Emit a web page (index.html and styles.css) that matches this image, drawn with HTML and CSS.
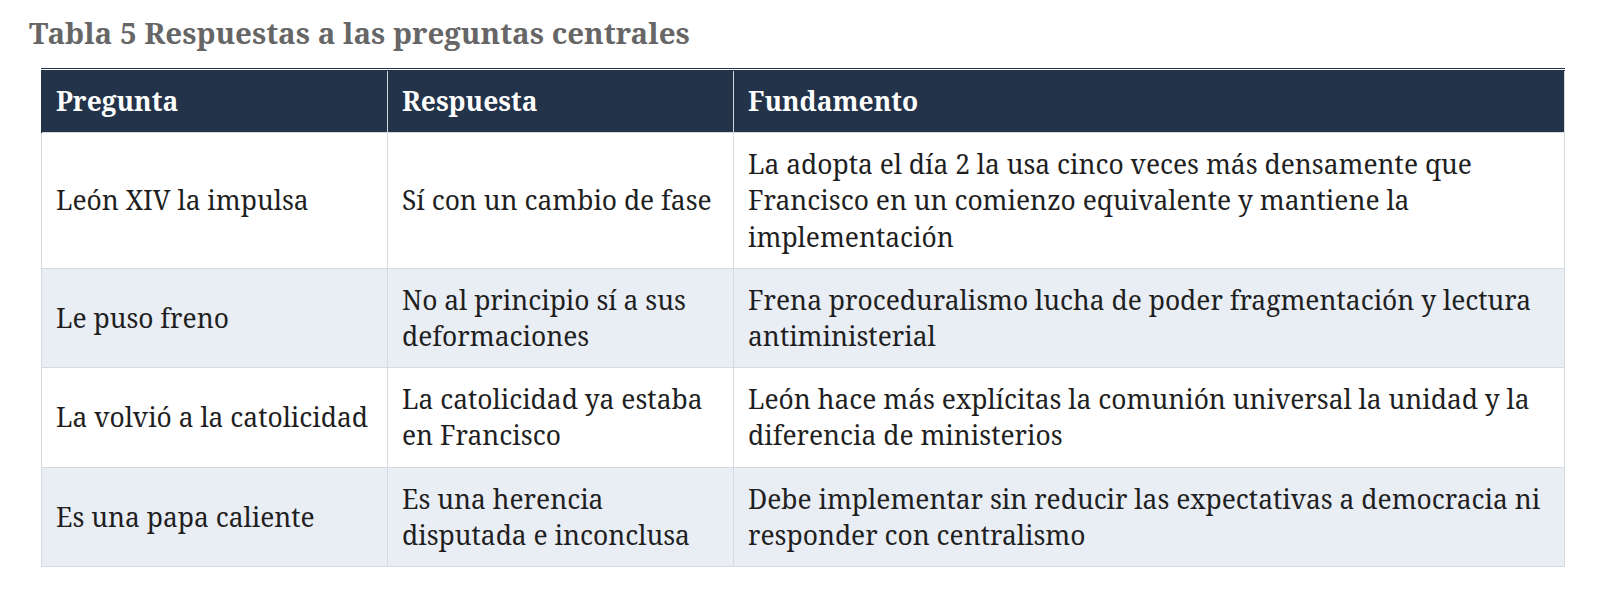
FILE: index.html
```html
<!DOCTYPE html>
<html lang="es">
<head>
<meta charset="utf-8">
<title>Tabla 5</title>
<link rel="stylesheet" href="styles.css">
</head>
<body>
<div class="page">
  <h2 class="caption">Tabla 5 Respuestas a las preguntas centrales</h2>
  <table class="tbl">
    <colgroup>
      <col class="c1"><col class="c2"><col class="c3">
    </colgroup>
    <thead>
      <tr><th>Pregunta</th><th>Respuesta</th><th>Fundamento</th></tr>
    </thead>
    <tbody>
      <tr>
        <td>León XIV la impulsa</td>
        <td>Sí con un cambio de fase</td>
        <td>La adopta el día 2 la usa cinco veces más densamente que Francisco en un comienzo equivalente y mantiene la implementación</td>
      </tr>
      <tr>
        <td>Le puso freno</td>
        <td>No al principio sí a sus deformaciones</td>
        <td>Frena proceduralismo lucha de poder fragmentación y lectura antiministerial</td>
      </tr>
      <tr>
        <td>La volvió a la catolicidad</td>
        <td>La catolicidad ya estaba en Francisco</td>
        <td>León hace más explícitas la comunión universal la unidad y la diferencia de ministerios</td>
      </tr>
      <tr>
        <td>Es una papa caliente</td>
        <td>Es una herencia disputada e inconclusa</td>
        <td>Debe implementar sin reducir las expectativas a democracia ni responder con centralismo</td>
      </tr>
    </tbody>
  </table>
</div>
</body>
</html>
```
FILE: styles.css
```css
html, body { margin: 0; padding: 0; background: #ffffff; }
.page {
  padding: 15px 0 0 29px;
  font-family: "Noto Serif", "DejaVu Serif", serif;
}
.caption {
  margin: 0 0 17px 0;
  font-size: 29.5px;
  line-height: 36px;
  font-weight: bold;
  color: #666666;
}
.tbl {
  margin-left: 12px;
  width: 1523px;
  table-layout: fixed;
  border-collapse: collapse;
  border: 1px solid #d6d9df;
  font-size: 26.4px;
  line-height: 36.2px;
  color: #1f1f1f;
}
.c1, .c2 { width: 346px; }
.c3 { width: 831px; }
.tbl thead tr { border-top: 3px double #23334a; }
.tbl th {
  background: #23334a;
  color: #ffffff;
  font-weight: bold;
  text-align: left;
  padding: 12px 14px 13px 14px;
  border-left: 1px solid #cfd6e0;
}
.tbl th:first-child { border-left: 1px solid #23334a; }
.tbl td {
  padding: 13px 14px 13px 14px;
  vertical-align: middle;
  border: 1px solid #d6d9df;
}
.tbl tbody tr:nth-child(even) td { background: #e9edf4; }
```
